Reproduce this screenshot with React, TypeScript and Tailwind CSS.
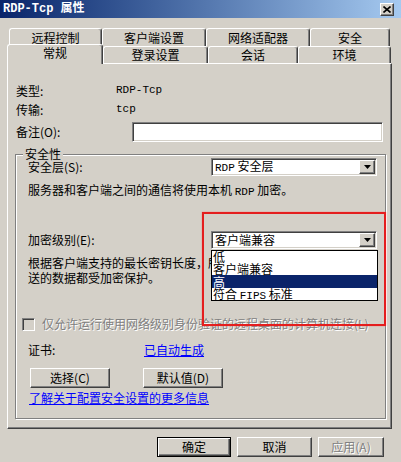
import React from 'react';

const raised =
  'border border-t-white border-l-white border-r-[#404040] border-b-[#404040] shadow-[inset_-1px_-1px_0_#808080]';
const sunken =
  'border border-t-[#808080] border-l-[#808080] border-r-white border-b-white shadow-[inset_1px_1px_0_#404040,inset_-1px_-1px_0_#d4d0c8]';

function Mono({ children }: { children: React.ReactNode }) {
  return <span className="font-['Liberation_Mono',monospace] text-[11px]">{children}</span>;
}

function Tab({ label, w, selected }: { label: string; w: string; selected?: boolean }) {
  return (
    <div
      className={`${w} ${
        selected ? 'relative z-10 h-[20px] pb-[3px]' : 'mt-[2px] h-[17px]'
      } flex shrink-0 items-center justify-center rounded-t-[3px] border-t border-l border-r border-t-white border-l-white border-r-[#404040] bg-[#d4d0c8] shadow-[inset_-1px_0_0_#808080]`}
    >
      {label}
    </div>
  );
}

function BackTab({ label, w }: { label: string; w: string }) {
  return (
    <div
      className={`${w} flex h-[18px] shrink-0 items-start justify-center rounded-t-[3px] border-t border-l border-r border-t-white border-l-white border-r-[#404040] pt-[2px] leading-[14px] shadow-[inset_-1px_0_0_#808080]`}
    >
      {label}
    </div>
  );
}

function Select({ children, open }: { children: React.ReactNode; open?: boolean }) {
  return (
    <div className={`relative flex h-[18px] w-[166px] items-center bg-white p-[1px] ${sunken}`}>
      <span className="flex-1 pl-[2px] leading-[14px]">{children}</span>
      <span className={`flex h-[14px] w-[16px] items-center justify-center bg-[#d4d0c8] ${raised}`}>
        <svg width="7" height="4" viewBox="0 0 7 4">
          <path d="M0 0h7L3.5 4z" fill="#000" />
        </svg>
      </span>
      {open && (
        <div className="absolute left-[-1px] top-[18px] z-10 w-[167px] border border-black bg-white">
          <div className="h-[12px] pl-[1px] leading-[12px]">低</div>
          <div className="h-[12px] pl-[1px] leading-[12px]">客户端兼容</div>
          <div className="h-[13px] bg-[#0a246a] pl-[1px] leading-[13px] text-white">高</div>
          <div className="h-[12px] pl-[1px] leading-[12px]">
            符合 <Mono>FIPS</Mono> 标准
          </div>
        </div>
      )}
    </div>
  );
}

function Button({ children, w, isDefault, disabled }: { children: React.ReactNode; w: string; isDefault?: boolean; disabled?: boolean }) {
  const frame = isDefault
    ? 'border border-black shadow-[inset_1px_1px_0_#fff,inset_-1px_-1px_0_#404040,inset_-2px_-2px_0_#808080]'
    : raised;
  return (
    <div
      className={`${w} ${frame} flex h-[20px] items-center justify-center bg-[#d4d0c8] ${
        disabled ? 'text-[#808080] [text-shadow:1px_1px_0_#fff]' : ''
      }`}
    >
      {children}
    </div>
  );
}

export default function App() {
  return (
    <div className="flex h-[462px] w-[401px] flex-col overflow-hidden bg-[#d4d0c8] font-['Noto_Sans_CJK_SC',sans-serif] text-[12px] text-black">
      {/* Title bar */}
      <div className="flex h-[18px] shrink-0 items-center bg-linear-to-r from-[#0a246a] to-[#a6caf0] pl-[3px]">
        <span className="font-['Liberation_Mono','Noto_Sans_CJK_SC',monospace] text-[12px] font-bold leading-[14px] text-white">
          RDP-Tcp 属性
        </span>
        <div className={`ml-auto mr-[7px] flex h-[13px] w-[14px] items-center justify-center bg-[#d4d0c8] ${raised}`}>
          <svg width="8" height="7" viewBox="0 0 8 7">
            <path d="M0.5 0.5L7.5 6.5M7.5 0.5L0.5 6.5" stroke="#000" strokeWidth="1.6" />
          </svg>
        </div>
      </div>

      {/* Tabs */}
      <div className="ml-[9px] mt-[10px] flex h-[18px]">
        <BackTab label="远程控制" w="w-[93px]" />
        <BackTab label="客户端设置" w="w-[104px]" />
        <BackTab label="网络适配器" w="w-[104px]" />
        <BackTab label="安全" w="w-[80px]" />
      </div>
      <div className="ml-[7px] -mt-[2px] flex h-[19px] items-start">
        <Tab label="常规" w="w-[96px]" selected />
        <Tab label="登录设置" w="w-[105px]" />
        <Tab label="会话" w="w-[90px]" />
        <Tab label="环境" w="w-[93px]" />
      </div>

      {/* Panel */}
      <div className="ml-[7px] h-[366px] w-[385px] shrink-0 border border-t-white border-l-white border-r-[#404040] border-b-[#404040] pl-[8px] pt-[17px] shadow-[inset_-1px_-1px_0_#808080]">
        <div className="flex h-[19px] items-center">
          <span className="w-[100px]">类型:</span>
          <Mono>RDP-Tcp</Mono>
        </div>
        <div className="flex h-[19px] items-center">
          <span className="w-[100px]">传输:</span>
          <Mono>tcp</Mono>
        </div>
        <div className="mt-[3px] flex h-[20px] items-center">
          <span className="w-[116px]">备注(O):</span>
          <div className={`h-[20px] w-[251px] bg-white ${sunken}`} />
        </div>

        {/* Group box */}
        <div className="relative -ml-[1px] mt-[12px] h-[265px] w-[371px] border border-[#808080] pl-[12px] pr-[8px] pt-[3px] shadow-[inset_1px_1px_0_#fff,1px_1px_0_#fff]">
          <span className="absolute -top-[8px] left-[7px] bg-[#d4d0c8] px-[2px] leading-[14px]">安全性</span>

          <div className="flex h-[18px] items-center justify-between">
            <span>安全层(S):</span>
            <Select>
              <Mono>RDP</Mono> 安全层
            </Select>
          </div>
          <div className="mt-[7px] h-[14px] leading-[14px]">
            服务器和客户端之间的通信将使用本机 <Mono>RDP</Mono> 加密。
          </div>

          <div className="mt-[34px] flex h-[18px] items-center justify-between">
            <span>加密级别(E):</span>
            <Select open>客户端兼容</Select>
          </div>
          <div className="mt-[6px] leading-[15px]">
            根据客户端支持的最长密钥长度，所有在客户端和服务器之间发
            <br />
            送的数据都受加密保护。
          </div>

          <div className="-ml-[6px] mt-[32px] flex h-[14px] items-center">
            <div className={`h-[13px] w-[13px] bg-[#d4d0c8] ${sunken}`} />
            <span className="ml-[7px] text-[#808080] [text-shadow:1px_1px_0_#fff]">
              仅允许运行使用网络级别身份验证的远程桌面的计算机连接(L)
            </span>
          </div>

          <div className="mt-[12px] flex h-[14px] items-center">
            <span className="w-[116px]">证书:</span>
            <span className="text-[#0000ff] underline">已自动生成</span>
          </div>

          <div className="ml-[2px] mt-[11px] flex gap-[33px]">
            <Button w="w-[80px]">选择(C)</Button>
            <Button w="w-[80px]">默认值(D)</Button>
          </div>
          <div className="ml-[1px] mt-[3px] h-[14px] leading-[14px] text-[#0000ff] underline">
            了解关于配置安全设置的更多信息
          </div>

          {/* annotation */}
          <div className="pointer-events-none absolute left-[186px] top-[57px] z-20 h-[114px] w-[184px] border-2 border-[#e41e1e] shadow-[0_0_1px_#ff6060]" />
        </div>
      </div>

      {/* Footer buttons */}
      <div className="ml-[157px] mt-[8px] flex gap-[6px]">
        <Button w="w-[74px]" isDefault>
          确定
        </Button>
        <Button w="w-[75px]">取消</Button>
        <Button w="w-[66px]" disabled>
          应用(A)
        </Button>
      </div>
    </div>
  );
}
